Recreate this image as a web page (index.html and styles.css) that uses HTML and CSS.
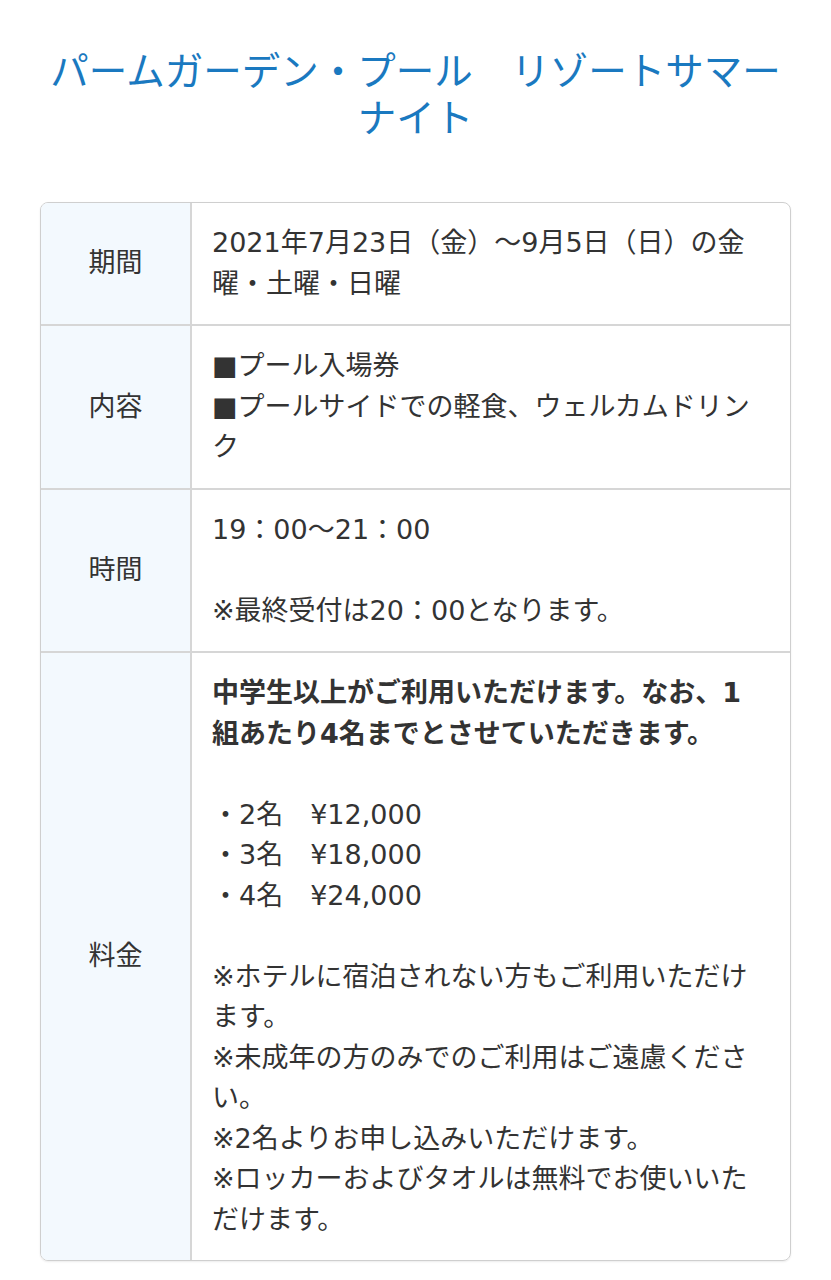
FILE: index.html
```html
<!DOCTYPE html>
<html lang="ja">
<head>
<meta charset="utf-8">
<title>パームガーデン・プール　リゾートサマーナイト</title>
<link rel="stylesheet" href="styles.css">
</head>
<body>
<h1 class="title">パームガーデン・プール　リゾートサマーナイト</h1>
<div class="spec">
  <div class="row">
    <div class="label">期間</div>
    <div class="value">2021年7月23日（金）〜9月5日（日）の金曜・土曜・日曜</div>
  </div>
  <div class="row">
    <div class="label">内容</div>
    <div class="value">■プール入場券<br>■プールサイドでの軽食、ウェルカムドリンク</div>
  </div>
  <div class="row">
    <div class="label">時間</div>
    <div class="value">19：00〜21：00<br><br>※最終受付は20：00となります。</div>
  </div>
  <div class="row">
    <div class="label">料金</div>
    <div class="value"><strong>中学生以上がご利用いただけます。なお、1組あたり4名までとさせていただきます。</strong><br><br>・2名　¥12,000<br>・3名　¥18,000<br>・4名　¥24,000<br><br>※ホテルに宿泊されない方もご利用いただけます。<br>※未成年の方のみでのご利用はご遠慮ください。<br>※2名よりお申し込みいただけます。<br>※ロッカーおよびタオルは無料でお使いいただけます。</div>
  </div>
</div>
</body>
</html>
```
FILE: styles.css
```css
html, body {
  margin: 0;
  padding: 0;
  background: #fff;
}
body {
  font-family: "DejaVu Sans", "Noto Sans CJK JP", sans-serif;
  color: #333;
}
.title {
  margin: 0;
  padding: 48px 40px 0;
  font-size: 38.5px;
  line-height: 47px;
  font-weight: normal;
  color: #1a79c0;
  text-align: center;
}
.spec {
  margin: 60px 40px 20px;
  border: 1px solid #cfcfcf;
  border-radius: 8px;
  overflow: hidden;
  box-shadow: 0 1px 2px rgba(0,0,0,0.08);
}
.row {
  display: grid;
  grid-template-columns: 151px 1fr;
}
.row + .row {
  border-top: 2px solid #d6d6d6;
}
.label {
  background: #f3f9fe;
  border-right: 2px solid #d6d6d6;
  display: flex;
  align-items: center;
  justify-content: center;
  font-size: 27px;
  line-height: 40.5px;
}
.value {
  padding: 20px 24px 20px 20px;
  font-size: 27px;
  line-height: 40.5px;
}
.value strong {
  font-weight: bold;
}
```
